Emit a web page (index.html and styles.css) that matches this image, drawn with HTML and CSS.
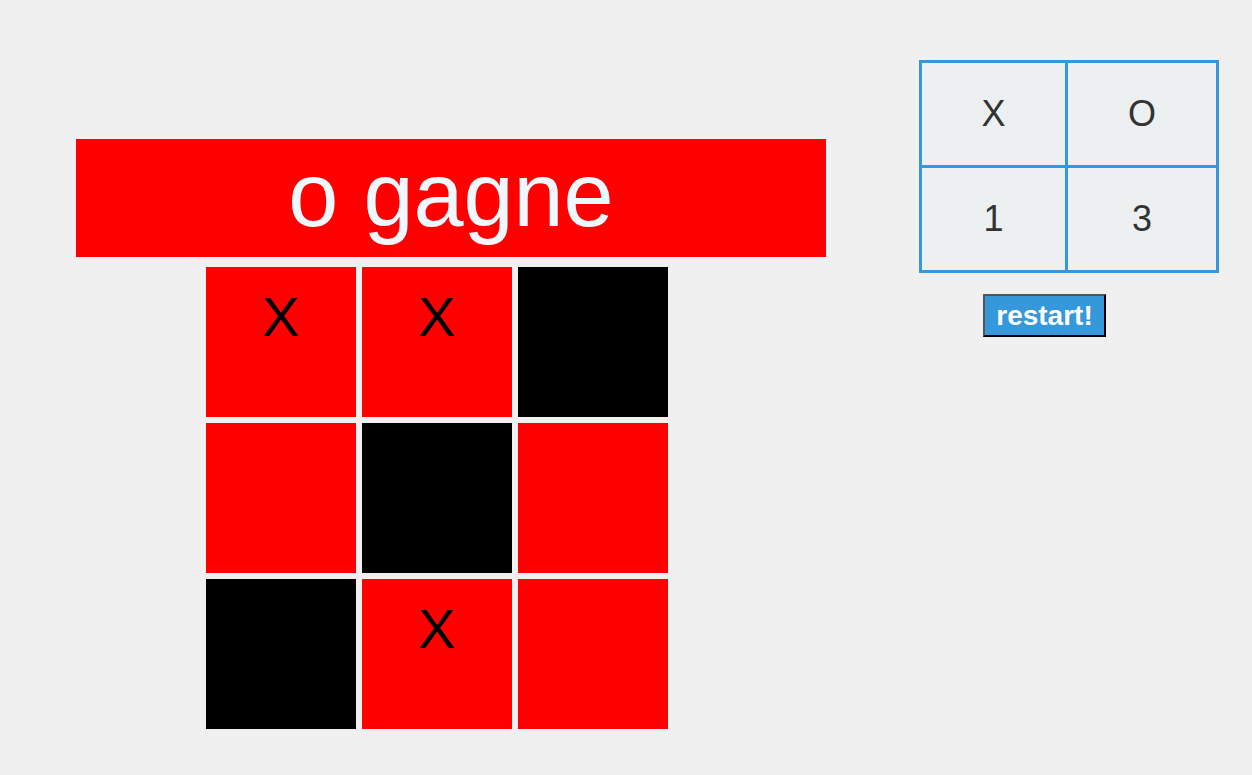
FILE: index.html
```html
<!DOCTYPE html>
<html lang="fr">
<head>
<meta charset="utf-8">
<title>Morpion</title>
<link rel="stylesheet" href="styles.css">
</head>
<body>
<main class="page">
  <section class="game">
    <h1 class="banner">o gagne</h1>
    <div class="board">
      <div class="cell red">X</div>
      <div class="cell red">X</div>
      <div class="cell black"></div>
      <div class="cell red"></div>
      <div class="cell black"></div>
      <div class="cell red"></div>
      <div class="cell black"></div>
      <div class="cell red">X</div>
      <div class="cell red"></div>
    </div>
  </section>
  <aside class="side">
    <table class="score">
      <tr><td class="c1">X</td><td class="c2">O</td></tr>
      <tr><td class="c1">1</td><td class="c2">3</td></tr>
    </table>
    <button class="restart">restart!</button>
  </aside>
</main>
</body>
</html>
```

FILE: styles.css
```css
html, body {
  margin: 0;
  padding: 0;
  background: #f0f0f0;
  font-family: "Liberation Sans", Arial, sans-serif;
}

.page {
  display: flex;
  align-items: flex-start;
}

.game {
  padding-left: 76px;
  padding-top: 139px;
}

.banner {
  margin: 0;
  width: 750px;
  height: 118px;
  box-sizing: border-box;
  padding-top: 5px;
  background: #ff0000;
  color: #f0f8ff;
  font-size: 90px;
  font-weight: normal;
  line-height: 103px;
  text-align: center;
}

.board {
  margin-top: 10px;
  margin-left: 130px;
  display: grid;
  grid-template-columns: repeat(3, 150px);
  grid-auto-rows: 150px;
  gap: 6px;
}

.cell {
  box-sizing: border-box;
  padding-top: 18px;
  font-size: 56px;
  line-height: 64px;
  text-align: center;
  color: #000;
}

.red { background: #ff0000; }
.black { background: #000; }

.side {
  margin-left: 93px;
  padding-top: 60px;
  display: flex;
  flex-direction: column;
  align-items: flex-start;
}

.score {
  border-collapse: collapse;
  background: #ecf0f1;
  border: 3px solid #3498db;
}

.score td {
  border: 3px solid #3498db;
  padding: 0;
  height: 102px;
  text-align: center;
  vertical-align: middle;
  font-size: 36px;
  color: #333;
}

.score .c1 { width: 143px; }
.score .c2 { width: 148px; }

.restart {
  margin-top: 21px;
  margin-left: 64px;
  width: 123px;
  height: 43px;
  padding: 0;
  background: #3498db;
  color: #fff;
  font-family: "Liberation Sans", Arial, sans-serif;
  font-weight: bold;
  font-size: 28px;
  border-width: 2px;
  border-style: solid;
  border-color: #555 #000 #000 #555;
}
```
